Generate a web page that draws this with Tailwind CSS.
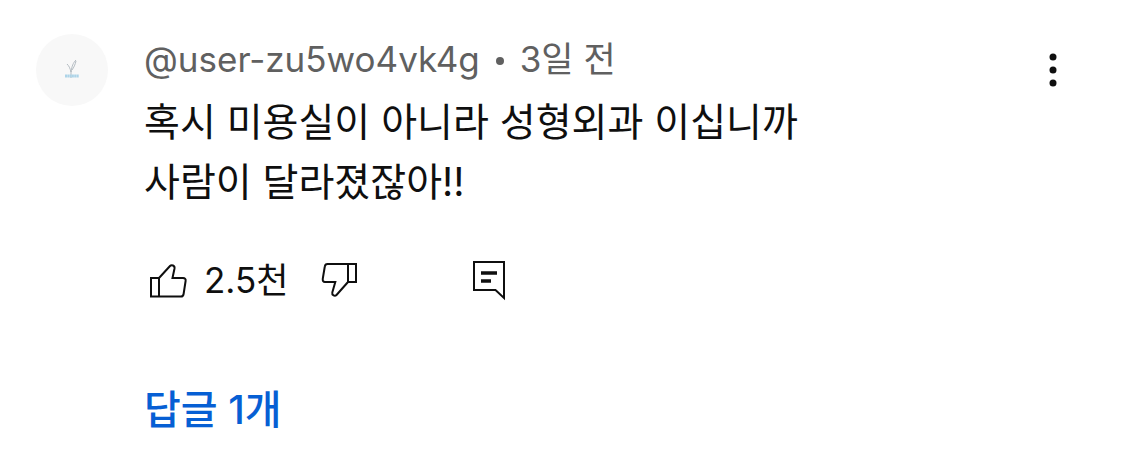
<!DOCTYPE html>
<html lang="ko">
<head>
    <meta charset="UTF-8">
    <meta name="viewport" content="width=device-width, initial-scale=1.0">
    <title>댓글</title>
    <script src="https://cdn.jsdelivr.net/npm/@tailwindcss/browser@4"></script>
</head>
<body class="bg-white font-['Inter','Noto_Sans_CJK_KR',sans-serif] text-[#0f0f0f]">
    <!-- Comment -->
    <article class="flex items-start pl-9 pr-12 pt-[34px]">
        <a href="#" aria-label="@user-zu5wo4vk4g" class="size-[72px] shrink-0 rounded-full bg-[#f8f8f8]">
            <svg class="size-full" viewBox="0 0 72 72" fill="none">
                <path d="M35 38c-1-4-2-6-4-8M35 38c1-6 2-9 5-12M40 27c-1 4-2 6-4 9M35 37v7" stroke="#b4bcc2" stroke-width="1"/>
                <path d="M29 42h14" stroke="#add4e8" stroke-width="3" stroke-dasharray="2 .3"/>
            </svg>
        </a>
        <div class="ml-9 min-w-0 flex-1">
            <div class="flex items-center gap-4 text-[35px] leading-[50px] text-[#606060]">
                <a href="#">@user-zu5wo4vk4g</a>
                <span class="mt-1 size-2 rounded-full bg-[#606060]"></span>
                <span>3일 전</span>
            </div>
            <p class="mt-2 text-[39px] leading-[60px]">혹시 미용실이 아니라 성형외과 이십니까<br>사람이 달라졌잖아!!</p>
            <!-- Actions -->
            <div class="mt-10 flex h-14 items-center pl-1">
                <button type="button" class="flex items-center gap-4 text-[35px] leading-[50px]">
                    <svg class="size-10" viewBox="0 0 40 40" fill="none" stroke="currentColor" stroke-width="2">
                        <path d="M3 18h8v18.500H3zM11 18 22 6c1.500-1.600 5-.5 4.500 2.500L24.500 18H35c2 0 3 1.200 2.600 3l-2 13c-.3 1.700-1 2.500-2.600 2.500H11"/>
                    </svg>
                    <span>2.5천</span>
                </button>
                <button type="button" aria-label="싫어요" class="ml-8">
                    <svg class="size-10" viewBox="0 0 40 40" fill="none" stroke="currentColor" stroke-width="2">
                        <path d="M36 4h-8v18h8zM28 4H7.500C6 4 5 5 4.800 6.500l-2 12C2.400 21 3.300 22 5 22h10.300l-3 10.500c-.6 2.800 2.500 4.200 4.200 2.500L28 22"/>
                    </svg>
                </button>
                <button type="button" aria-label="답글" class="ml-27">
                    <svg class="size-11" viewBox="0 0 44 44" fill="none" stroke="currentColor">
                        <path d="M6 4h30v36l-8.500-8H6z" stroke-width="2"/>
                        <path d="M13 15h16M13 23h10" stroke-width="3.500"/>
                    </svg>
                </button>
            </div>
            <a href="#" class="mt-[72px] inline-block text-[40px] leading-[60px] font-medium text-[#065fd4]">답글 1개</a>
        </div>
        <button type="button" aria-label="더보기" class="mt-4 flex w-12 shrink-0 justify-center">
            <svg class="h-10 w-3" viewBox="0 0 12 40" fill="currentColor">
                <circle cx="6" cy="7" r="3.500"/>
                <circle cx="6" cy="20" r="3.500"/>
                <circle cx="6" cy="33" r="3.500"/>
            </svg>
        </button>
    </article>
</body>
</html>
